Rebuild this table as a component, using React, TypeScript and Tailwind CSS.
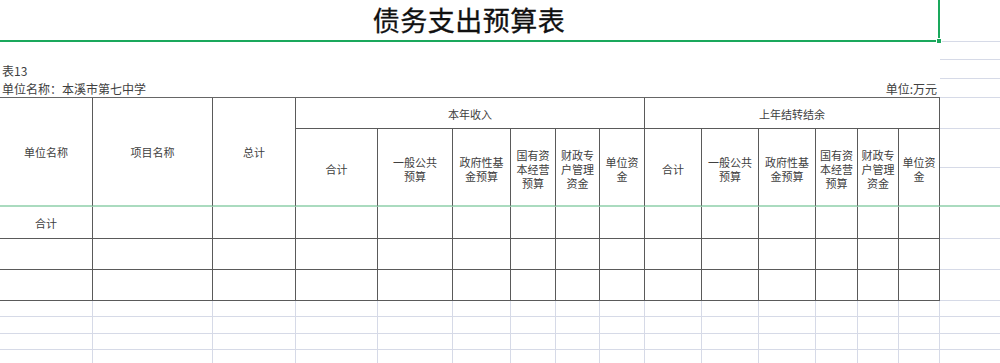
import React from "react";

const SUB: string[][] = [
  ["合计"],
  ["一般公共", "预算"],
  ["政府性基", "金预算"],
  ["国有资", "本经营", "预算"],
  ["财政专", "户管理", "资金"],
  ["单位资", "金"],
];

const LIGHT_B = "border-b border-[#d6dae7]";
const LIGHT_RB = "border-r border-b border-[#d6dae7]";
const DARK_RB = "border-r border-b border-[#5a5a5a]";

function Sub({ lines }: { lines: string[] }) {
  return (
    <div className="row-span-2 flex flex-col items-center justify-center border-r border-r-[#5a5a5a] border-b-2 border-b-[#aadbbf] pt-[4px] text-[11px] leading-[14px] text-[#404040]">
      {lines.map((l) => (
        <span key={l}>{l}</span>
      ))}
    </div>
  );
}

export default function App() {
  const dataRows = [0, 1, 2];
  const emptyRows = [0, 1, 2, 3];
  const cols15 = Array.from({ length: 15 }, (_, i) => i);

  return (
    <div className="h-[363px] w-[1000px] overflow-hidden bg-white font-['Noto_Sans_CJK_SC','Liberation_Sans',sans-serif]">
      <div className="grid grid-cols-[93px_120px_83px_82px_75px_58px_45px_44px_45px_57px_57px_57px_42px_41px_41px_60px] grid-rows-[42px_18px_19px_19px_31px_39px_39px_32px_31px_31px_16px_17px_16px_17px]">
        {/* title row */}
        <div className="relative col-span-15 flex items-center justify-center border-r-2 border-b-2 border-[#1aa85c] pb-[1px]">
          <span className="text-[27px] font-normal leading-none tracking-[0.5px] text-[#111111] [-webkit-text-stroke:0.3px_#111111]">债务支出预算表</span>
          <span className="absolute -bottom-[4px] -right-[4px] h-[6px] w-[6px] border border-white bg-[#1aa85c]" />
        </div>
        <div className={LIGHT_B} />

        {/* empty row */}
        <div className="col-span-15" />
        <div className={LIGHT_B} />

        {/* 表13 */}
        <div className="col-span-15 flex items-end pb-[1px] pl-[2px] text-[12px] leading-[14px] text-[#404040]">表13</div>
        <div className={LIGHT_B} />

        {/* unit row */}
        <div className="col-span-15 flex items-end justify-between border-b border-[#666666] pb-[1px] pl-[2px] pr-[3px] text-[12px] leading-[14px] text-[#404040]">
          <span>单位名称：本溪市第七中学</span>
          <span>单位:万元</span>
        </div>
        <div className={LIGHT_B} />

        {/* header */}
        <div className="row-span-3 flex items-center justify-center border-r border-r-[#5a5a5a] border-b-2 border-b-[#aadbbf] pt-[2px] text-[11px] text-[#404040]">单位名称</div>
        <div className="row-span-3 flex items-center justify-center border-r border-r-[#5a5a5a] border-b-2 border-b-[#aadbbf] pt-[2px] text-[11px] text-[#404040]">项目名称</div>
        <div className="row-span-3 flex items-center justify-center border-r border-r-[#5a5a5a] border-b-2 border-b-[#aadbbf] pt-[2px] text-[11px] text-[#404040]">总计</div>
        <div className={`col-span-6 flex items-center justify-center pt-[3px] text-[11px] text-[#404040] ${DARK_RB}`}>本年收入</div>
        <div className={`col-span-6 flex items-center justify-center pt-[3px] text-[11px] text-[#404040] ${DARK_RB}`}>上年结转结余</div>
        <div className={LIGHT_B} />
        {SUB.map((l, i) => (
          <Sub key={"a" + i} lines={l} />
        ))}
        {SUB.map((l, i) => (
          <Sub key={"b" + i} lines={l} />
        ))}
        <div className={LIGHT_B} />
        <div className="border-b-2 border-[#aadbbf]" />

        {/* data rows */}
        {dataRows.map((r) => (
          <React.Fragment key={"d" + r}>
            {cols15.map((c) => (
              <div key={c} className={`flex items-center justify-center pt-[1px] text-[11px] text-[#404040] ${DARK_RB}`}>
                {r === 0 && c === 0 ? "合计" : ""}
              </div>
            ))}
            <div className={LIGHT_B} />
          </React.Fragment>
        ))}

        {/* empty sheet rows */}
        {emptyRows.map((r) => (
          <React.Fragment key={"e" + r}>
            {cols15.map((c) => (
              <div key={c} className={LIGHT_RB} />
            ))}
            <div className={LIGHT_B} />
          </React.Fragment>
        ))}
      </div>
    </div>
  );
}
